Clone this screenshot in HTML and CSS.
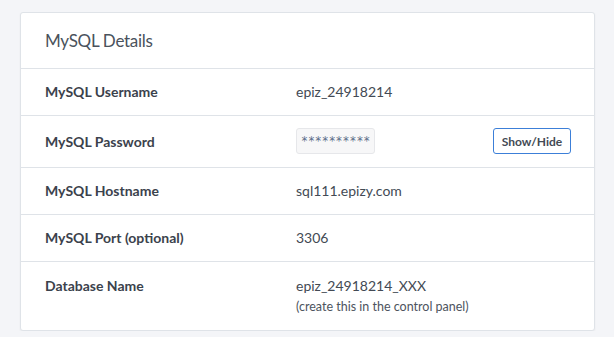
FILE: index.html
```html
<!DOCTYPE html>
<html lang="en">
<head>
  <meta charset="UTF-8" />
  <title>MySQL Details</title>
  <link rel="stylesheet" href="styles.css">
</head>
<body>

  <div class="card">
    <div class="card-header">MySQL Details</div>

    <div class="row">
      <div class="label">MySQL Username</div>
      <div class="value">epiz_24918214</div>
    </div>

    <div class="row">
      <div class="label">MySQL Password</div>
      <div class="value split">
        <span class="secret">**********</span>
        <button class="btn-outline">Show/Hide</button>
      </div>
    </div>

    <div class="row">
      <div class="label">MySQL Hostname</div>
      <div class="value">sql111.epizy.com</div>
    </div>

    <div class="row">
      <div class="label">MySQL Port (optional)</div>
      <div class="value">3306</div>
    </div>

    <div class="row top">
      <div class="label">Database Name</div>
      <div class="value">
        epiz_24918214_XXX
        <div class="hint">(create this in the control panel)</div>
      </div>
    </div>
  </div>

</body>
</html>
```

FILE: styles.css
```css
body {
  margin: 0;
  padding: 12px 19px 0 20px;
  background: #f4f5f8;
  color: #3f4650;
  font-family: 'Lato', 'Open Sans', sans-serif;
  font-size: 14px;
}

.card {
  background: #fff;
  border: 1px solid #dfe3e8;
  border-radius: 3px;
  box-shadow: 0 1px 2px rgba(0, 0, 0, 0.05);
}

.card-header {
  height: 55px;
  line-height: 55px;
  padding: 0 24px;
  font-size: 17px;
  letter-spacing: -0.3px;
  color: #4a525c;
}

.row {
  display: grid;
  grid-template-columns: 251px 1fr;
  align-items: center;
  border-top: 1px solid #dfe3e8;
  padding: 12px 0 13px 24px;
  line-height: 21px;
}

.row.top {
  align-items: start;
  padding-top: 13px;
  padding-bottom: 12px;
}

.label {
  font-weight: bold;
  color: #3b424c;
}

.value {
  color: #434a54;
}

.split {
  display: flex;
  justify-content: space-between;
  align-items: center;
  padding-right: 23px;
}

.secret {
  display: inline-block;
  height: 24px;
  line-height: 24px;
  padding: 0 4px;
  background: #f7f7f8;
  border: 1px solid #e6e7ea;
  border-radius: 3px;
  font-family: 'DejaVu Sans Mono', monospace;
  font-size: 11.5px;
  color: #5c6d88;
}

.btn-outline {
  width: 78px;
  height: 26px;
  background: #fff;
  border: 1px solid #3c7fd8;
  border-radius: 3px;
  font-family: inherit;
  font-size: 12px;
  font-weight: bold;
  color: #434a54;
  padding: 0;
}

.hint {
  font-size: 12.5px;
  line-height: 22px;
  color: #4d545e;
}
```
